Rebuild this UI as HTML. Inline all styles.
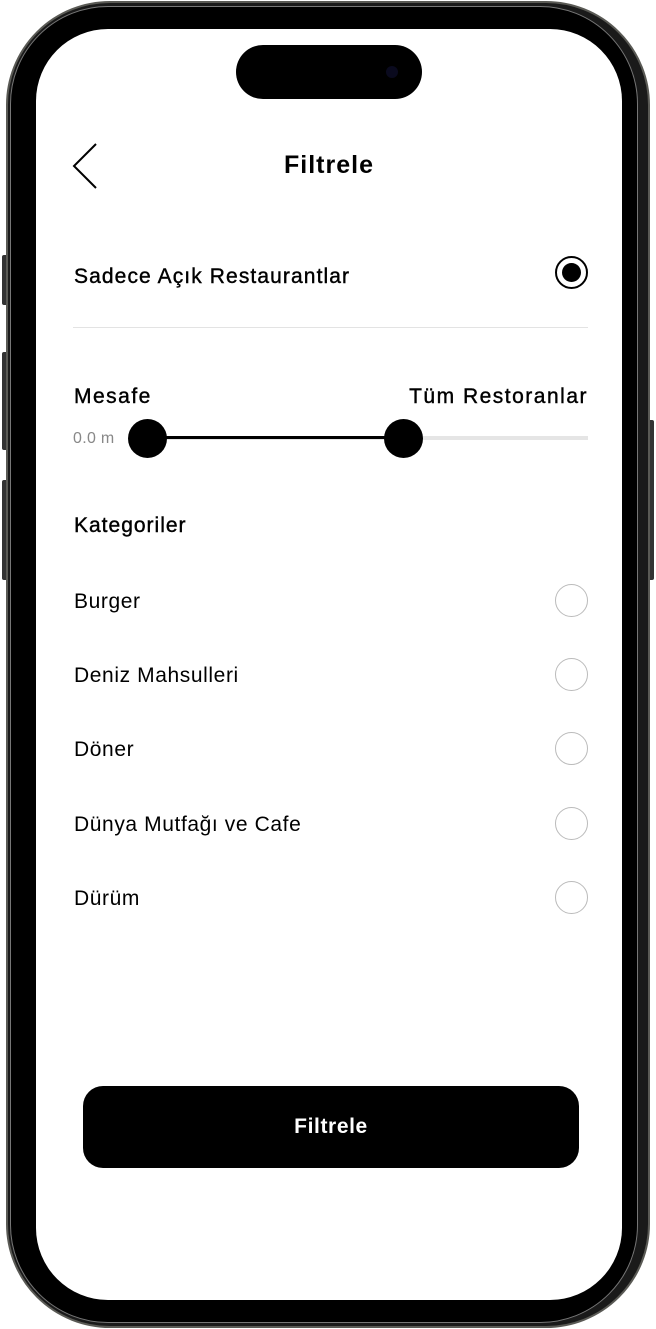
<!DOCTYPE html>
<html><head><meta charset="utf-8"><style>
*{margin:0;padding:0;box-sizing:border-box}
body{width:656px;height:1329px;background:#fff;position:relative;overflow:hidden;font-family:"Liberation Sans",sans-serif;color:#000}
.btn{position:absolute;background:#333;border-radius:2px}
.outer{position:absolute;left:6px;top:1px;width:644px;height:1327px;border-radius:104px;background:#1a1a1a;border:2px solid #5a5a55}
.inner{position:absolute;left:10px;top:6px;width:628px;height:1317px;border-radius:98px;background:#000;border:1px solid #777}
.screen{position:absolute;left:36px;top:29px;width:586px;height:1271px;border-radius:72px;background:#fff;overflow:hidden}
.island{position:absolute;left:200px;top:16px;width:186px;height:54px;border-radius:27px;background:#000}
.cam{position:absolute;left:150px;top:21px;width:12px;height:12px;border-radius:50%;background:#0a0a1e}
.t{position:absolute;font-size:21px;letter-spacing:0.6px;white-space:nowrap}
.m{-webkit-text-stroke:0.4px #000;letter-spacing:1.5px}
.radio{position:absolute;left:519px;width:33px;height:33px;border-radius:50%;border:1.5px solid #bbb}
</style></head><body>
<div class="btn" style="left:2px;top:255px;width:6px;height:50px"></div>
<div class="btn" style="left:2px;top:352px;width:6px;height:98px"></div>
<div class="btn" style="left:2px;top:480px;width:6px;height:100px"></div>
<div class="btn" style="left:648px;top:420px;width:6px;height:160px"></div>
<div class="outer"></div>
<div class="inner"></div>
<div class="screen">
<div class="island"><div class="cam"></div></div>
<svg style="position:absolute;left:34px;top:112px" width="30" height="50"><path d="M26 3 L4 25 L26 47" fill="none" stroke="#000" stroke-width="2"/></svg>
<div class="t" style="left:0;width:586px;text-align:center;top:122px;font-size:25px;font-weight:bold;letter-spacing:1px">Filtrele</div>
<div class="t m" style="left:38px;top:236px;letter-spacing:1.1px">Sadece Açık Restaurantlar</div>
<div style="position:absolute;left:519px;top:227px;width:33px;height:33px;border-radius:50%;border:2px solid #000"><div style="position:absolute;left:5px;top:5px;width:19px;height:19px;border-radius:50%;background:#000"></div></div>
<div style="position:absolute;left:37px;top:298px;width:515px;height:1px;background:#e3e3e3"></div>
<div class="t m" style="left:38px;top:356px">Mesafe</div>
<div class="t m" style="right:34px;top:356px">Tüm Restoranlar</div>
<div class="t" style="left:37px;top:401px;font-size:16px;color:#888;letter-spacing:0.3px">0.0 m</div>
<div style="position:absolute;left:112px;top:407px;width:440px;height:4px;background:#e5e5e5"></div>
<div style="position:absolute;left:112px;top:407px;width:255px;height:3px;background:#000"></div>
<div style="position:absolute;left:92px;top:390px;width:39px;height:39px;border-radius:50%;background:#000"></div>
<div style="position:absolute;left:348px;top:390px;width:39px;height:39px;border-radius:50%;background:#000"></div>
<div class="t m" style="left:38px;top:485px;letter-spacing:1px">Kategoriler</div>
<div class="t" style="left:38px;top:561px">Burger</div><div class="radio" style="top:555px"></div>
<div class="t" style="left:38px;top:635px">Deniz Mahsulleri</div><div class="radio" style="top:629px"></div>
<div class="t" style="left:38px;top:709px">Döner</div><div class="radio" style="top:703px"></div>
<div class="t" style="left:38px;top:784px">Dünya Mutfağı ve Cafe</div><div class="radio" style="top:778px"></div>
<div class="t" style="left:38px;top:858px">Dürüm</div><div class="radio" style="top:852px"></div>
<div style="position:absolute;left:47px;top:1057px;width:496px;height:82px;border-radius:20px;background:#000;color:#fff;font-weight:bold;font-size:21px;letter-spacing:0.6px;text-align:center;line-height:82px">Filtrele</div>
</div>
</body></html>
